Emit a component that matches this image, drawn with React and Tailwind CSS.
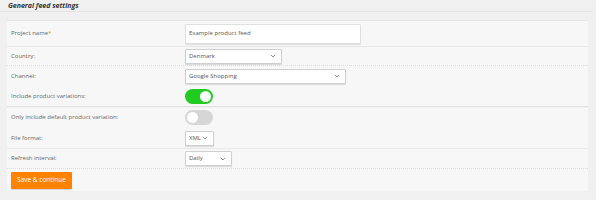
import React from 'react';

const Chevron = () => (
  <svg width="6" height="4" viewBox="0 0 6 4" className="shrink-0">
    <path d="M0.8 0.8 L3 3 L5.2 0.8" fill="none" stroke="#777" strokeWidth="0.8" />
  </svg>
);

const Select = ({ value, width }) => (
  <div
    className={`flex items-center justify-between h-[15px] pl-[3px] pr-[5px] bg-white border border-[#cfcfcf] rounded-[1px] shadow-[0_1px_1px_rgba(0,0,0,0.12)] text-[6px] text-[#555] ${width}`}
  >
    <span>{value}</span>
    <Chevron />
  </div>
);

const Toggle = ({ on }) => (
  <div
    className={`relative w-[28px] h-[15px] rounded-full ${on ? 'bg-[#1fcc1f]' : 'bg-[#d6d6d6]'}`}
  >
    <div
      className={`absolute top-[2px] w-[11px] h-[11px] rounded-full bg-white ${on ? 'left-[15px]' : 'left-[2px]'}`}
    />
  </div>
);

const Row = ({ label, children, h, border }) => (
  <div className={`flex items-center ${h} ${border}`}>
    <div className="w-[178px] pl-[4px] text-[6px] text-[#666]">{label}</div>
    <div className="flex items-center">{children}</div>
  </div>
);

export default function App() {
  return (
    <div
      className="w-[596px] h-[200px] bg-[#f0f0f0] overflow-hidden"
      style={{ fontFamily: '"Open Sans", "Noto Sans", sans-serif' }}
    >
      {/* Header */}
      <div className="h-[12px] pl-[8px] pt-[1px] border-b border-[#e4e4e4] mr-[3px] text-[7px] leading-[9px]">
        <span className="font-bold italic text-[#333]">General feed settings</span>
      </div>

      {/* Panel */}
      <div className="ml-[7px] mr-[8px] mt-[8px] bg-[#f7f7f7] border-t border-[#e6e6e6]">
        <Row label={<>Project name<span className="text-[#f08a24]">*</span></>} h="h-[26px]" border="border-b border-[#e8e8e8]">
          <div className="w-[176px] h-[20px] bg-white border border-[#e0e0e0] rounded-[1px] shadow-[0_1px_1px_rgba(0,0,0,0.1)] flex items-center pl-[3px] text-[6px] text-[#555]">
            Example product feed
          </div>
        </Row>
        <Row label="Country:" h="h-[19px]" border="border-b border-dotted border-[#dddddd]">
          <Select value="Denmark" width="w-[97px]" />
        </Row>
        <Row label="Channel:" h="h-[20px]">
          <Select value="Google Shopping" width="w-[161px]" />
        </Row>
        <Row label="Include product variations:" h="h-[21px]" border="border-b border-[#e2e2e2] shadow-[0_1px_0_rgba(0,0,0,0.03)]">
          <Toggle on />
        </Row>
        <Row label="Only include default product variation:" h="h-[21px]">
          <Toggle />
        </Row>
        <Row label="File format:" h="h-[21px]" border="border-b border-[#e8e8e8]">
          <Select value="XML" width="w-[29px]" />
        </Row>
        <Row label="Refresh interval:" h="h-[20px]" border="border-b border-dotted border-[#dddddd]">
          <Select value="Daily" width="w-[47px]" />
        </Row>
        <div className="h-[22px] flex items-center pl-[4px]">
          <button className="w-[61px] h-[17px] bg-[#ff8200] text-white text-[6.5px] rounded-[1px] shadow-[0_1px_1px_rgba(0,0,0,0.15)]">
            Save &amp; continue
          </button>
        </div>
      </div>
    </div>
  );
}
